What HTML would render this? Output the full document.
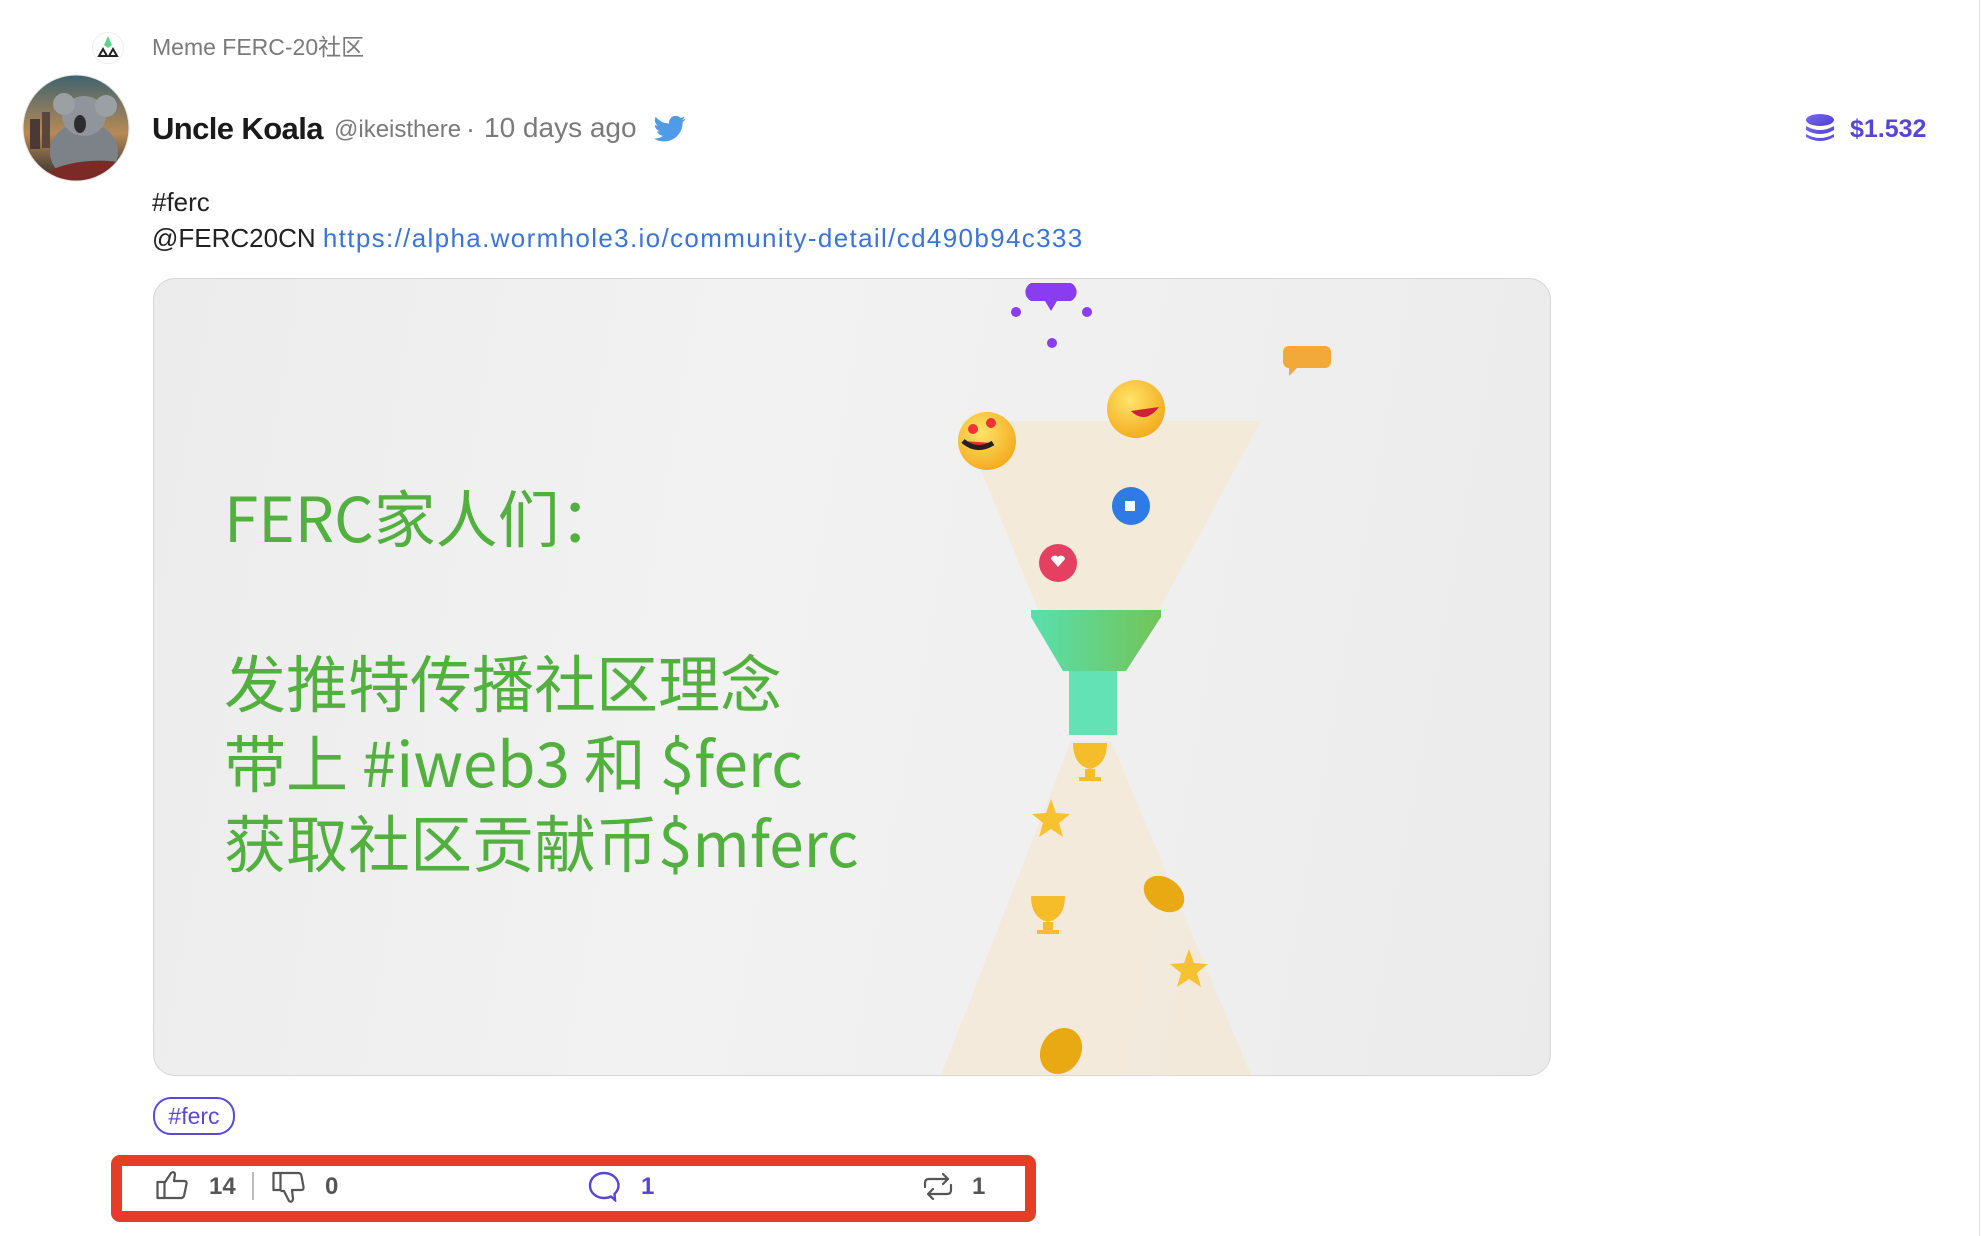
<!DOCTYPE html>
<html><head><meta charset="utf-8">
<style>
html,body{margin:0;padding:0;background:#fff;}
body{width:1982px;height:1236px;position:relative;overflow:hidden;font-family:"Liberation Sans","Noto Sans CJK SC",sans-serif;}
.abs{position:absolute;}
.grey{color:#7a7a7a;}
</style></head><body>

<svg class="abs" style="left:92px;top:32px" width="32" height="32" viewBox="0 0 32 32">
<circle cx="16" cy="16" r="15.5" fill="#fff" stroke="#eee"/>
<path d="M16 4 L20 13 L16 16 L12 13 Z" fill="#5fd38a"/>
<path d="M7 24 L11 17 L15 24 Z M17 24 L21 17 L25 24 Z" fill="none" stroke="#222" stroke-width="2"/>
</svg>
<div class="abs grey" style="left:152px;top:33px;font-size:23px;line-height:28px;">Meme FERC-20社区</div>

<svg class="abs" style="left:22px;top:74px" width="108" height="108" viewBox="0 0 108 108">
<defs><clipPath id="av"><circle cx="54" cy="54" r="53"/></clipPath>
<linearGradient id="sky" x1="0" y1="0" x2="0" y2="1"><stop offset="0" stop-color="#3d6270"/><stop offset="0.55" stop-color="#b88a55"/><stop offset="1" stop-color="#2a2a2e"/></linearGradient></defs>
<g clip-path="url(#av)">
<rect width="108" height="108" fill="url(#sky)"/>
<rect x="8" y="45" width="10" height="30" fill="#4a3a35"/><rect x="20" y="38" width="8" height="36" fill="#5a463c"/>
<ellipse cx="62" cy="78" rx="34" ry="30" fill="#7c8288"/>
<ellipse cx="62" cy="42" rx="22" ry="20" fill="#8f959a"/>
<circle cx="42" cy="30" r="11" fill="#9aa0a4"/><circle cx="84" cy="32" r="11" fill="#9aa0a4"/>
<ellipse cx="58" cy="50" rx="6" ry="9" fill="#2d2d30"/>
<path d="M20 100 Q60 80 108 90 L108 108 L20 108Z" fill="#7a2b25"/>
</g>
<circle cx="54" cy="54" r="53" fill="none" stroke="#e6e6e6" stroke-width="1"/>
</svg>

<div class="abs" style="left:152px;top:109px;font-size:31px;line-height:40px;font-weight:bold;color:#1a1a1a;letter-spacing:-0.6px;white-space:nowrap;">Uncle Koala</div>
<div class="abs grey" style="left:334px;top:115px;font-size:24px;line-height:30px;white-space:nowrap;">@ikeisthere</div>
<div class="abs grey" style="left:466px;top:113px;font-size:27px;line-height:32px;">·</div>
<div class="abs grey" style="left:484px;top:112px;font-size:28px;line-height:32px;white-space:nowrap;">10 days ago</div>
<svg class="abs" style="left:654px;top:115px" width="32" height="28" viewBox="0 0 24 20">
<path d="M23.6 2.4c-.9.4-1.8.6-2.8.8 1-.6 1.8-1.5 2.1-2.7-.9.6-2 1-3.1 1.2A4.9 4.9 0 0 0 11.4 6 13.9 13.9 0 0 1 1.3.9a4.9 4.9 0 0 0 1.5 6.5c-.8 0-1.6-.2-2.2-.6 0 2.4 1.7 4.4 3.9 4.8-.7.2-1.5.2-2.2.1.6 1.900 2.4 3.4 4.6 3.4A9.8 9.8 0 0 1 0 17.1 13.9 13.9 0 0 0 7.5 19.300c9 0 14-7.5 14-14v-.6c1-.7 1.8-1.5 2.1-2.3z" fill="#4f9be6"/>
</svg>

<svg class="abs" style="left:1805px;top:113px" width="30" height="30" viewBox="0 0 30 30">
<defs><linearGradient id="pc" x1="0" y1="0" x2="1" y2="1"><stop offset="0" stop-color="#7a6cf0"/><stop offset="1" stop-color="#4b3fd0"/></linearGradient></defs>
<ellipse cx="15" cy="7" rx="14" ry="6" fill="url(#pc)"/>
<path d="M1 13 Q15 21 29 13 L29 17 Q15 25 1 17Z" fill="url(#pc)"/>
<path d="M1 21 Q15 29 29 21 L29 24 Q15 32 1 24Z" fill="url(#pc)"/>
</svg>
<div class="abs" style="left:1850px;top:114px;font-size:25px;line-height:30px;font-weight:bold;color:#5646d6;">$1.532</div>

<div class="abs" style="left:152px;top:184px;font-size:26px;line-height:36px;color:#222;white-space:nowrap;">#ferc<br>@FERC20CN <span style="color:#3b74d9;letter-spacing:1.35px">https://alpha.wormhole3.io/community-detail/cd490b94c333</span></div>

<div class="abs" style="left:153px;top:278px;width:1396px;height:796px;border:1px solid #d6d6d6;border-radius:22px;overflow:hidden;background:linear-gradient(100deg,#ececec 0%,#f2f2f2 40%,#efefef 70%,#ebebeb 100%);">
<svg class="abs" style="left:0;top:0" width="1396" height="796" viewBox="153 278 1396 796">
<defs>
<radialGradient id="em" cx="0.4" cy="0.35" r="0.7"><stop offset="0" stop-color="#ffe46a"/><stop offset="1" stop-color="#f2a91c"/></radialGradient>
<linearGradient id="fn" x1="0" y1="0" x2="1" y2="0"><stop offset="0" stop-color="#58dfae"/><stop offset="1" stop-color="#73c457"/></linearGradient>
</defs>
<polygon points="960,420 1260,420 1125,670 1062,670" fill="#f6e6cc" opacity="0.6"/>
<polygon points="1070,740 1110,740 1250,1074 940,1074" fill="#f6e6cc" opacity="0.55"/>
<path d="M1030 282 h40 a10 10 0 0 1 0 18 h-14 l-6 10 l-6 -10 h-14 a10 10 0 0 1 0 -18z" fill="#8a3df0"/>
<circle cx="1015" cy="311" r="5" fill="#8a3df0"/><circle cx="1086" cy="311" r="5" fill="#8a3df0"/><circle cx="1051" cy="342" r="5" fill="#8a3df0"/>
<path d="M1286 345 h38 a6 6 0 0 1 6 6 v10 a6 6 0 0 1 -6 6 h-28 l-8 8 v-8 a6 6 0 0 1 -6 -6 v-10 a6 6 0 0 1 6 -6z" fill="#f3a93a"/>
<circle cx="986" cy="440" r="29" fill="url(#em)"/>
<path d="M962 440 q14 12 30 2" stroke="#222" stroke-width="5" fill="#d33"/>
<circle cx="972" cy="428" r="5" fill="#e33"/><circle cx="990" cy="422" r="5" fill="#e33"/>
<circle cx="1135" cy="408" r="29" fill="url(#em)"/>
<path d="M1130 410 q14 14 28 -4 z" fill="#c23"/>
<circle cx="1130" cy="505" r="19" fill="#2e7be6"/><rect x="1124" y="500" width="10" height="10" fill="#fff"/>
<circle cx="1057" cy="562" r="19" fill="#e54062"/><path d="M1050 558 a4 4 0 0 1 7 -2 a4 4 0 0 1 7 2 l-7 8z" fill="#fff"/>
<polygon points="1030,609 1160,609 1160,616 1125,670 1062,670 1030,616" fill="url(#fn)"/>
<rect x="1068" y="670" width="48" height="64" fill="#62e2b5"/>
<path d="M1072 742 h34 q0 22 -17 26 q-17 -4 -17 -26z M1084 768 h10 v8 h6 v4 h-22 v-4 h6z" fill="#f6bd2a"/>
<path d="M1050 798 l5 14 14 1 -11 9 4 14 -12 -8 -12 8 4 -14 -11 -9 14 -1z" fill="#f7c22f"/>
<path d="M1030 895 h34 q0 22 -17 26 q-17 -4 -17 -26z M1042 921 h10 v8 h6 v4 h-22 v-4 h6z" fill="#f6bd2a"/>
<ellipse cx="1163" cy="893" rx="22" ry="16" transform="rotate(35 1163 893)" fill="#e9a912"/>
<path d="M1188 948 l5 14 14 1 -11 9 4 14 -12 -8 -12 8 4 -14 -11 -9 14 -1z" fill="#f7c22f"/>
<ellipse cx="1060" cy="1050" rx="20" ry="24" transform="rotate(30 1060 1050)" fill="#e9a912"/>
</svg>
<div class="abs" style="left:70px;top:196px;font-family:'Noto Sans CJK SC',sans-serif;font-size:62px;line-height:80px;color:#52b03f;white-space:nowrap;">FERC家人们：</div>
<div class="abs" style="left:70px;top:361px;font-family:'Noto Sans CJK SC',sans-serif;font-size:62px;line-height:80px;color:#52b03f;white-space:nowrap;">发推特传播社区理念<br>带上 #iweb3 和 $ferc<br>获取社区贡献币$mferc</div>
</div>

<div class="abs" style="left:153px;top:1097px;width:78px;height:34px;border:2px solid #5a49d3;border-radius:18px;color:#5a49d3;font-size:23px;line-height:34px;text-align:center;">#ferc</div>

<div class="abs" style="left:111px;top:1155px;width:903px;height:45px;border:11px solid #e63e26;border-radius:9px;"></div>
<svg class="abs" style="left:156px;top:1170px" width="33" height="30" viewBox="0 0 33 30" fill="none" stroke="#555" stroke-width="2.2" stroke-linejoin="round">
<rect x="1.5" y="12" width="7" height="16"/><path d="M8.5 13 L15 3 Q18 1 19 4 L18 11 H28 Q31 11 30.5 14 L28 26 Q27 28 25 28 H8.5"/>
</svg>
<div class="abs" style="left:209px;top:1173px;font-size:24px;line-height:28px;font-weight:bold;color:#555;">14</div>
<div class="abs" style="left:252px;top:1172px;width:2px;height:28px;background:#bbb;"></div>
<svg class="abs" style="left:272px;top:1171px" width="34" height="34" viewBox="0 0 34 34" fill="none" stroke="#555" stroke-width="2.2" stroke-linejoin="round">
<rect x="1.5" y="2" width="7" height="17"/><path d="M8.5 2 H26 Q29 2 29.5 5 L31.5 16 Q32 19 29 19 H20 L21 28 Q20 32 17 30 L12 20 H8.5"/>
</svg>
<div class="abs" style="left:325px;top:1173px;font-size:24px;line-height:28px;font-weight:bold;color:#555;">0</div>
<svg class="abs" style="left:588px;top:1171px" width="33" height="31" viewBox="0 0 33 31" fill="none" stroke="#5646d6" stroke-width="2.4">
<path d="M16 2 C8 2 2 7.5 2 14.5 C2 21.5 8 27 16 27 C19 27 21 26.5 23 25.5 L27 29 L26.5 23 C29 20.5 30.5 17.5 30.5 14.5 C30.5 7.5 24 2 16 2Z"/>
</svg>
<div class="abs" style="left:641px;top:1173px;font-size:24px;line-height:28px;font-weight:bold;color:#5646d6;">1</div>
<svg class="abs" style="left:922px;top:1171px" width="32" height="32" viewBox="0 0 32 32" fill="none" stroke="#555" stroke-width="2.2" stroke-linecap="round" stroke-linejoin="round">
<path d="M3 16 V12 Q3 8 7 8 H26 M21 3 L26 8 L21 13"/><path d="M29 14 V19 Q29 23 25 23 H6 M11 18 L6 23 L11 28"/>
</svg>
<div class="abs" style="left:972px;top:1173px;font-size:24px;line-height:28px;font-weight:bold;color:#555;">1</div>

<div class="abs" style="left:1979px;top:0;width:1px;height:1236px;background:#e2e2e2;"></div>
</body></html>
